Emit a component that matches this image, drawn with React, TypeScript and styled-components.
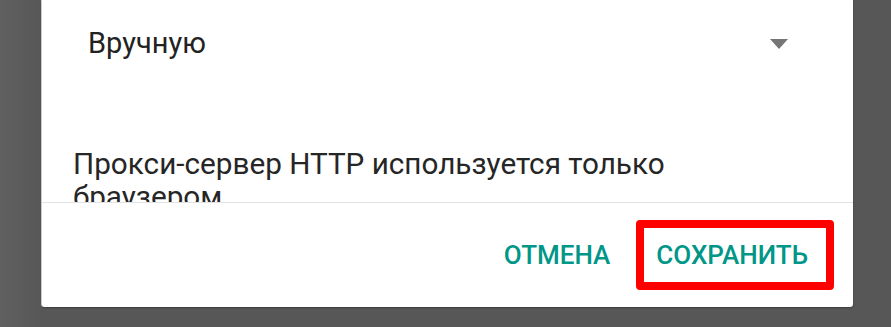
import styled, { createGlobalStyle } from "styled-components";

const GlobalStyle = createGlobalStyle`
  html, body {
    margin: 0;
    padding: 0;
    background: #5a5a5a;
    font-family: Roboto, "Noto Sans", "Liberation Sans", sans-serif;
  }
`;

const Screen = styled.div`
  display: flex;
  height: 327px;
  padding: 0 38px 20px 42px;
  box-sizing: border-box;
  background: linear-gradient(to right, #606060, #575757 42px);
`;

const Dialog = styled.div`
  flex: 1;
  display: flex;
  flex-direction: column;
  background: #fff;
  border-radius: 0 0 3px 3px;
  box-shadow: 0 1px 2px rgba(0, 0, 0, 0.3), -1px 0 0 #dcdcdc;
  overflow: hidden;
`;

// scrolled content of the dialog; the helper's second line runs under the divider
const Content = styled.div`
  flex: 1;
  overflow: hidden;
`;

const Spinner = styled.div`
  display: flex;
  align-items: center;
  justify-content: space-between;
  margin: 26px 65px 0 46px;
  font-size: 29px;
  line-height: 35px;
  color: #222;
`;

const Arrow = styled.span`
  width: 0;
  height: 0;
  border-left: 9px solid transparent;
  border-right: 9px solid transparent;
  border-top: 10px solid #757575;
`;

const Helper = styled.p`
  max-width: 630px;
  margin: 86px 0 0 31px;
  font-size: 29.7px;
  line-height: 33px;
  color: #262626;
`;

const Actions = styled.div`
  display: flex;
  align-items: center;
  justify-content: flex-end;
  gap: 14px;
  height: 104px;
  padding-right: 29px;
  border-top: 1px solid #e2e2e2;
`;

const Button = styled.button<{ $marked?: boolean }>`
  position: relative;
  height: 48px;
  padding: 0 16px;
  border: none;
  background: none;
  font-family: Roboto, "Noto Sans", sans-serif;
  font-size: 26px;
  font-weight: 500;
  color: #009688;
  cursor: pointer;

  ${({ $marked }) =>
    $marked &&
    `
    &::after {
      content: "";
      position: absolute;
      top: -11px;
      bottom: -11px;
      left: -4px;
      right: -10px;
      border: 8px solid #ff0000;
      border-radius: 4px;
    }
  `}
`;

export default function App() {
  return (
    <>
      <GlobalStyle />
      <Screen>
        <Dialog>
          <Content>
            <Spinner>
              <span>Вручную</span>
              <Arrow />
            </Spinner>
            <Helper>Прокси-сервер HTTP используется только браузером.</Helper>
          </Content>
          <Actions>
            <Button>ОТМЕНА</Button>
            <Button $marked>СОХРАНИТЬ</Button>
          </Actions>
        </Dialog>
      </Screen>
    </>
  );
}
